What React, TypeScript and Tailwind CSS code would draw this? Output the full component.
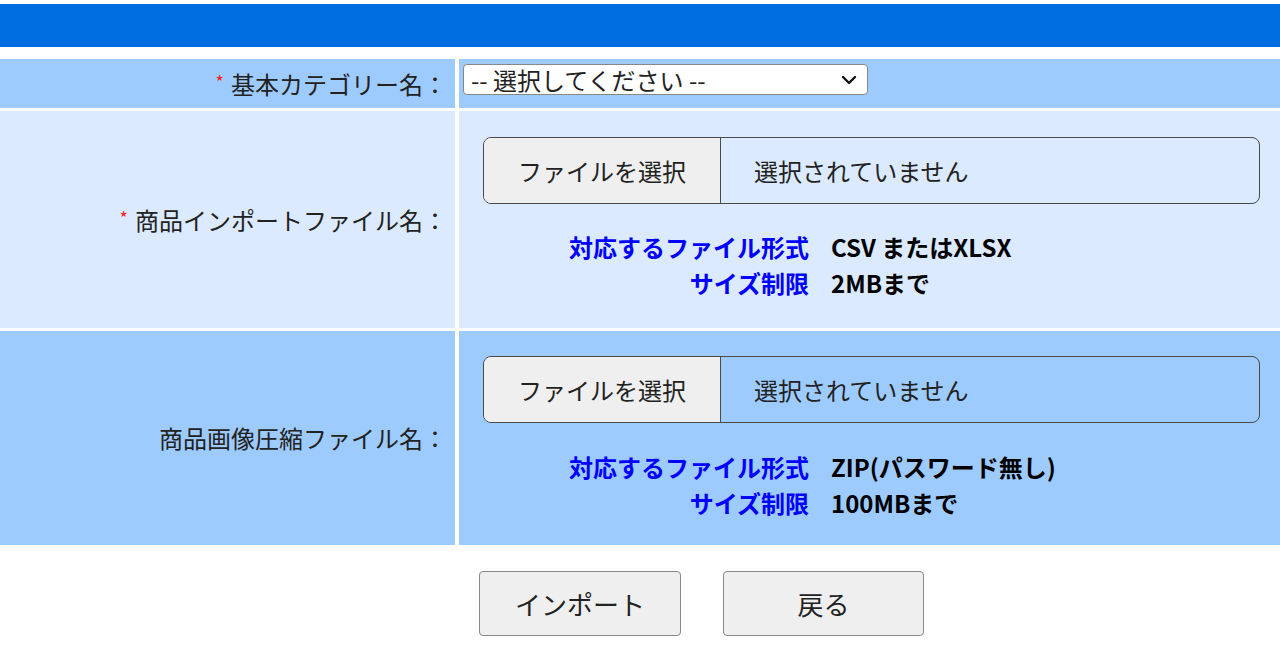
import React from "react";

const FileInput = () => (
  <div className="flex h-[67px] w-[777px] items-stretch overflow-hidden rounded-[8px] border border-[#4a4a4a]">
    <div className="flex w-[237px] items-center justify-center border-r border-[#4a4a4a] bg-[#efefef] text-[24px] text-[#222]">
      ファイルを選択
    </div>
    <div className="flex items-center pl-[33px] text-[24px] text-[#222]">選択されていません</div>
  </div>
);

const Info = ({ format, size }: { format: string; size: string }) => (
  <div className="ml-[86px] grid grid-cols-[auto_auto] justify-start gap-x-[22px] text-[24px] font-bold leading-[36px]">
    <div className="text-right text-[#0000ff]">対応するファイル形式</div>
    <div className="text-black">{format}</div>
    <div className="text-right text-[#0000ff]">サイズ制限</div>
    <div className="text-black">{size}</div>
  </div>
);

const Label = ({ text, required }: { text: string; required?: boolean }) => (
  <div className="flex items-center justify-end pr-[8px] text-[24px] text-[#222]">
    {required && <span className="mr-[7px] -mt-[6px] text-[18px] leading-none text-[#ff2020]">*</span>}
    {text}
  </div>
);

export default function App() {
  return (
    <div className="min-h-screen bg-white font-['Noto_Sans_CJK_JP',sans-serif]">
      <div className="pt-[4px]">
        <div className="h-[43px] bg-[#006ee0]" />
      </div>

      <div className="mt-[12px] grid grid-cols-[455px_1fr] gap-x-[4px] gap-y-[3px]">
        {/* 基本カテゴリー */}
        <div className="flex h-[49px] bg-[#9ecbfe]">
          <div className="flex flex-1 items-center justify-end">
            <Label text="基本カテゴリー名：" required />
          </div>
        </div>
        <div className="h-[49px] bg-[#9ecbfe] pl-[4px] pt-[5px]">
          <div className="flex h-[31px] w-[405px] items-center justify-between rounded-[4px] border border-[#888] bg-white pl-[7px] pr-[8px] text-[24px] leading-none text-[#222]">
            <span>-- 選択してください --</span>
            <svg width="20" height="20" viewBox="0 0 20 20" fill="none" stroke="#111" strokeWidth="2.4" strokeLinecap="round" strokeLinejoin="round">
              <path d="M4 7l6 6 6-6" />
            </svg>
          </div>
        </div>

        {/* 商品インポートファイル */}
        <div className="flex h-[217px] bg-[#dbeafe]">
          <div className="flex flex-1 items-center justify-end">
            <Label text="商品インポートファイル名：" required />
          </div>
        </div>
        <div className="h-[217px] bg-[#dbeafe] pl-[24px] pt-[26px]">
          <FileInput />
          <div className="mt-[25px]">
            <Info format="CSV またはXLSX" size="2MBまで" />
          </div>
        </div>

        {/* 商品画像圧縮ファイル */}
        <div className="flex h-[214px] bg-[#9ecbfe]">
          <div className="flex flex-1 items-center justify-end">
            <Label text="商品画像圧縮ファイル名：" />
          </div>
        </div>
        <div className="h-[214px] bg-[#9ecbfe] pl-[24px] pt-[25px]">
          <FileInput />
          <div className="mt-[26px]">
            <Info format="ZIP(パスワード無し)" size="100MBまで" />
          </div>
        </div>
      </div>

      <div className="mt-[26px] flex gap-[42px] pl-[479px]">
        <button className="h-[65px] w-[202px] rounded-[4px] border border-[#888] bg-[#efefef] text-[26px] text-[#222]">
          インポート
        </button>
        <button className="h-[65px] w-[201px] rounded-[4px] border border-[#888] bg-[#efefef] text-[26px] text-[#222]">
          戻る
        </button>
      </div>
    </div>
  );
}
